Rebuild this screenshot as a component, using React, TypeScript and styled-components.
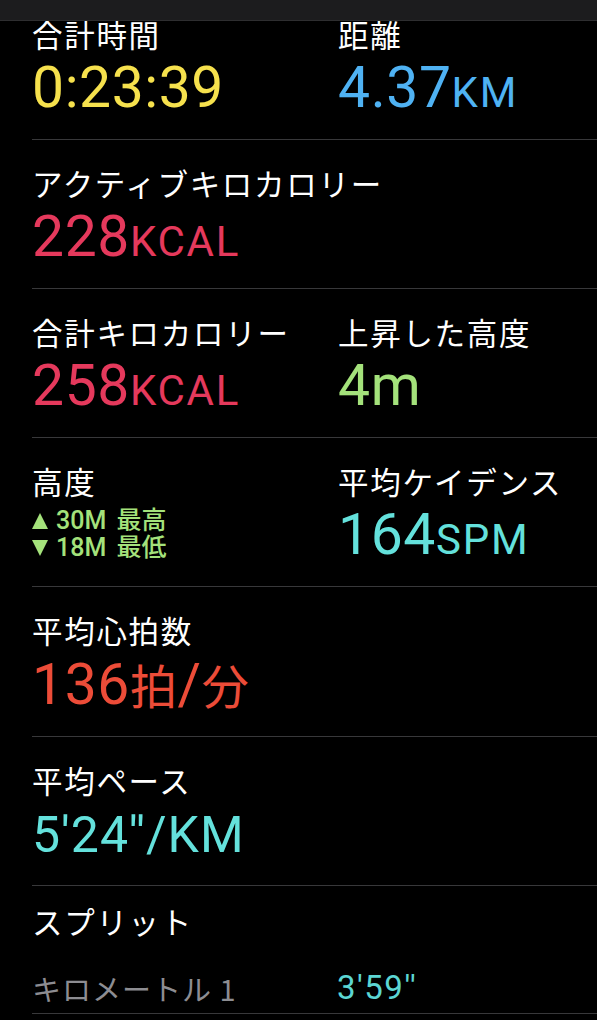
import styled, { createGlobalStyle } from "styled-components";

const GlobalStyle = createGlobalStyle`
  html, body {
    margin: 0;
    padding: 0;
    background: #000;
  }

  body {
    font-family: Roboto, "Noto Sans CJK JP", sans-serif;
    color: #fff;
    overflow: hidden;
  }
`;

const colors = {
  yellow: "#f6e14d",
  blue: "#4fb2f3",
  kcal: "#e5395c",
  green: "#a4e27b",
  cyan: "#64e1dc",
  heart: "#ec4c38",
  gray: "#8d8d92",
  line: "#38383a",
};

type Metric = {
  label: string;
  value: string;
  unit?: string;
  color: string;
};

const rows: Metric[][] = [
  [
    { label: "合計時間", value: "0:23:39", color: colors.yellow },
    { label: "距離", value: "4.37", unit: "KM", color: colors.blue },
  ],
  [{ label: "アクティブキロカロリー", value: "228", unit: "KCAL", color: colors.kcal }],
  [
    { label: "合計キロカロリー", value: "258", unit: "KCAL", color: colors.kcal },
    { label: "上昇した高度", value: "4m", color: colors.green },
  ],
];

const Arrow = ({ up }: { up?: boolean }) => (
  <svg width="16" height="16" viewBox="0 0 16 16">
    <polygon points={up ? "8,0 16,16 0,16" : "0,0 16,0 8,16"} fill={colors.green} />
  </svg>
);

const MetricCell = ({ m }: { m: Metric }) => (
  <Cell>
    <Label>{m.label}</Label>
    <Value $color={m.color}>
      {m.value}
      {m.unit && <Unit>{m.unit}</Unit>}
    </Value>
  </Cell>
);

export default function App() {
  return (
    <Screen>
      <GlobalStyle />
      <TopBar />
      <List>
        {rows.map((row, i) => (
          <Row key={i}>
            {row.map((m) => (
              <MetricCell key={m.label} m={m} />
            ))}
          </Row>
        ))}

        <Row>
          <Cell>
            <Label>高度</Label>
            <AltitudeLines>
              <AltLine>
                <Arrow up />
                30M 最高
              </AltLine>
              <AltLine>
                <Arrow />
                18M 最低
              </AltLine>
            </AltitudeLines>
          </Cell>
          <MetricCell
            m={{ label: "平均ケイデンス", value: "164", unit: "SPM", color: colors.cyan }}
          />
        </Row>

        <Row $extra={1}>
          <Cell>
            <Label>平均心拍数</Label>
            <Value $color={colors.heart}>
              136<Kanji>拍</Kanji>/<Kanji>分</Kanji>
            </Value>
          </Cell>
        </Row>

        <Row>
          <Cell>
            <Label>平均ペース</Label>
            <Value $color={colors.cyan} $compact>
              5'24''/KM
            </Value>
          </Cell>
        </Row>

        <SplitHeader>
          <Label>スプリット</Label>
        </SplitHeader>
        <SplitRow>
          <SplitName>キロメートル 1</SplitName>
          <SplitValue>3'59''</SplitValue>
        </SplitRow>
      </List>
    </Screen>
  );
}

const Screen = styled.div`
  width: 597px;
  height: 1020px;
  overflow: hidden;
  background: #000;
`;

const TopBar = styled.div`
  position: sticky;
  top: 0;
  z-index: 2;
  height: 20px;
  background: #1c1c1e;
  border-bottom: 1px solid #2e2e30;
`;

/* list is scrolled up a little under the bar */
const List = styled.div`
  margin-top: -30px;
  padding-left: 32px;
`;

const Row = styled.div<{ $extra?: number }>`
  display: grid;
  grid-template-columns: 306px 1fr;
  padding: 26px 0 ${(p) => 23 + (p.$extra ?? 0)}px;
  border-bottom: 1px solid ${colors.line};
`;

const Cell = styled.div`
  display: flex;
  flex-direction: column;
  gap: 9px;
  min-width: 0;
`;

const Label = styled.div`
  font-family: "Noto Sans CJK JP", sans-serif;
  font-size: 30.5px;
  line-height: 34px;
  letter-spacing: 1.7px;
  font-weight: 400;
  color: #fff;
  white-space: nowrap;
`;

const Value = styled.div<{ $color: string; $compact?: boolean }>`
  font-family: Roboto, "Noto Sans CJK JP", sans-serif;
  font-size: ${(p) => (p.$compact ? "50px" : "57px")};
  line-height: ${(p) => (p.$compact ? "58px" : "56px")};
  letter-spacing: ${(p) => (p.$compact ? "1px" : "0.6px")};
  height: 56px;
  font-weight: 400;
  color: ${(p) => p.$color};
  white-space: nowrap;
`;

const Unit = styled.span`
  font-size: 42px;
  letter-spacing: 1.8px;
`;

const Kanji = styled.span`
  font-family: "Noto Sans CJK JP", sans-serif;
  font-size: 47px;
`;

const AltitudeLines = styled.div`
  display: flex;
  flex-direction: column;
`;

const AltLine = styled.div`
  display: flex;
  align-items: center;
  gap: 8px;
  font-family: Roboto, "Noto Sans CJK JP", sans-serif;
  font-size: 25px;
  line-height: 27px;
  font-weight: 500;
  word-spacing: 4px;
  color: ${colors.green};
  white-space: nowrap;
`;

const SplitHeader = styled.div`
  padding-top: 18px;
`;

const SplitRow = styled.div`
  display: grid;
  grid-template-columns: 305px 1fr;
  padding: 34px 0 9px;
  border-bottom: 1px solid ${colors.line};
`;

const SplitName = styled.div`
  font-family: "Noto Sans CJK JP", sans-serif;
  font-size: 29px;
  line-height: 32px;
  letter-spacing: 1px;
  color: ${colors.gray};
  white-space: nowrap;
`;

const SplitValue = styled.div`
  font-family: Roboto, sans-serif;
  font-size: 33px;
  line-height: 32px;
  letter-spacing: 1.5px;
  color: #5cd6d3;
`;
